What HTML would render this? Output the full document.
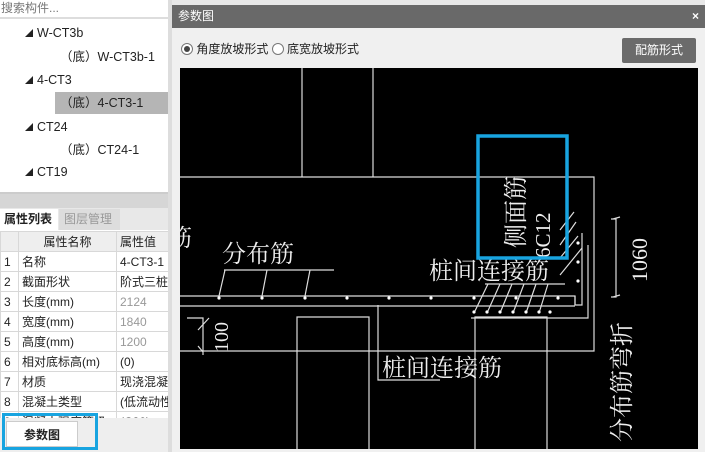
<!DOCTYPE html>
<html><head><meta charset="utf-8"><style>
*{margin:0;padding:0;box-sizing:border-box}
body{width:705px;height:452px;overflow:hidden;background:#f0f0f0;position:relative;font-family:"Liberation Sans","Noto Sans CJK SC",sans-serif;font-size:12px;color:#222}
.abs{position:absolute}
.tree div{position:absolute;height:22px;line-height:22px;font-size:12.5px}
.tri{font-size:8px;vertical-align:1px;margin-right:4px}
table{border-collapse:collapse;font-size:12px}
td{border:1px solid #d8d8d8;height:20px;padding:0 3px;white-space:nowrap;overflow:hidden;background:#fff}
</style></head><body>
<div class="abs" style="left:0;top:0;width:168px;height:452px;background:#fff"></div>
<div class="abs" style="left:0;top:0;width:168px;height:19px;border-bottom:2px solid #ddd;color:#777;line-height:17px;padding-left:1px">搜索构件...</div>
<div class="tree">
<div style="left:25px;top:22px"><span class="tri">◢</span>W-CT3b</div>
<div style="left:60px;top:46px">（底）W-CT3b-1</div>
<div style="left:25px;top:69px"><span class="tri">◢</span>4-CT3</div>
<div style="left:55px;top:92px;width:113px;background:#b5b5b5;padding-left:5px">（底）4-CT3-1</div>
<div style="left:25px;top:116px"><span class="tri">◢</span>CT24</div>
<div style="left:60px;top:139px">（底）CT24-1</div>
<div style="left:25px;top:161px"><span class="tri">◢</span>CT19</div>
</div>
<div class="abs" style="left:0;top:192px;width:168px;height:16px;background:#d6d6d6;border-top:2px solid #ccc"></div>
<div class="abs" style="left:0;top:208px;width:168px;height:22px;background:#e8e8e8"></div>
<div class="abs" style="left:0;top:209px;width:58px;height:21px;background:#fff;font-weight:bold;line-height:21px;padding-left:4px">属性列表</div>
<div class="abs" style="left:59px;top:209px;width:61px;height:21px;background:#ddd;color:#999;line-height:21px;padding-left:5px">图层管理</div>
<table class="abs" style="left:0;top:231px;width:168px;table-layout:fixed">
<colgroup><col style="width:18px"><col style="width:98px"><col style="width:52px"></colgroup>
<tr><td style="background:#eee"></td><td style="background:#eee;text-align:center">属性名称</td><td style="background:#eee">属性值</td></tr>
<tr><td>1</td><td>名称</td><td>4-CT3-1</td></tr>
<tr><td>2</td><td>截面形状</td><td>阶式三桩台</td></tr>
<tr><td>3</td><td>长度(mm)</td><td style="color:#999">2124</td></tr>
<tr><td>4</td><td>宽度(mm)</td><td style="color:#999">1840</td></tr>
<tr><td>5</td><td>高度(mm)</td><td style="color:#999">1200</td></tr>
<tr><td>6</td><td>相对底标高(m)</td><td>(0)</td></tr>
<tr><td>7</td><td>材质</td><td>现浇混凝土</td></tr>
<tr><td>8</td><td>混凝土类型</td><td>(低流动性混</td></tr>
<tr><td>9</td><td>混凝土强度等级</td><td>(C30)</td></tr>
</table>
<div class="abs" style="left:0;top:418px;width:168px;height:34px;background:#eee"></div>
<div class="abs" style="left:6px;top:421px;width:72px;height:26px;background:#fff;border:1px solid #ccc;text-align:center;line-height:26px;font-weight:bold">参数图</div>
<div class="abs" style="left:2px;top:413px;width:96px;height:37px;border:3px solid #18a4e0"></div>
<div class="abs" style="left:168px;top:0;width:4px;height:452px;background:#ddd"></div>
<div class="abs" style="left:172px;top:5px;width:533px;height:23px;background:#696969;color:#fff;line-height:23px;padding-left:6px;font-size:12px">参数图<span style="position:absolute;right:6px;font-weight:bold">×</span></div>
<div class="abs" style="left:172px;top:0;width:533px;height:5px;background:#e8e8e8"></div>
<div class="abs" style="left:181px;top:42px;font-size:12px;line-height:14px"><span style="display:inline-block;width:12px;height:12px;border:1px solid #777;border-radius:50%;vertical-align:-2px;position:relative;background:#fff"><span style="position:absolute;left:2px;top:2px;width:6px;height:6px;border-radius:50%;background:#444"></span></span> 角度放坡形式 <span style="display:inline-block;width:12px;height:12px;border:1px solid #777;border-radius:50%;vertical-align:-2px;background:#fff"></span> 底宽放坡形式</div>
<div class="abs" style="left:622px;top:38px;width:74px;height:25px;background:#6b6b6b;color:#fff;border-radius:2px;text-align:center;line-height:25px">配筋形式</div>
<svg class="abs" style="left:180px;top:68px" width="518" height="381" viewBox="180 68 518 381">
<rect x="180" y="68" width="518" height="381" fill="#000"/>
<g stroke="#ddd" stroke-width="1.2" fill="none">
<path d="M302 68V177M373 68V177M180 177H594V351H180"/>
<path d="M297 449V317H369V449M475 449V317H547V449"/>
<path d="M378 305V380H440"/>
<path d="M180 296H575V305M180 306H575"/>
<path d="M575 296V305H582V233M588 245V318H471"/>
<path d="M224 270H334M225 270L219 296M267 270L262 296M310 270L305 296"/>
<path d="M485 284H565M488 284L474 313M500 284L487 313M512 284L500 313M524 284L513 313M536 284L526 313M548 284L539 313"/>
<path d="M560 230L574 212M560 245L576 222M560 258L578 236M560 275L582 248"/>
<path d="M187 318H203V355M198 330L209 318M198 346L203 352"/>
<path d="M611 219H616V297H611M613 219L620 217M613 297L620 295"/>
</g>
<g fill="#fff"><circle cx="219" cy="298" r="1.6"/><circle cx="262" cy="298" r="1.6"/><circle cx="305" cy="298" r="1.6"/><circle cx="347" cy="298" r="1.6"/><circle cx="389" cy="298" r="1.6"/><circle cx="431" cy="298" r="1.6"/><circle cx="474" cy="298" r="1.6"/><circle cx="516" cy="298" r="1.6"/><circle cx="558" cy="298" r="1.6"/>
<circle cx="474" cy="312" r="1.6"/><circle cx="487" cy="312" r="1.6"/><circle cx="500" cy="312" r="1.6"/><circle cx="513" cy="312" r="1.6"/><circle cx="526" cy="312" r="1.6"/><circle cx="539" cy="312" r="1.6"/><circle cx="550" cy="312" r="1.6"/>
<circle cx="578" cy="243" r="1.6"/><circle cx="578" cy="262" r="1.6"/><circle cx="578" cy="281" r="1.6"/></g>
<g fill="#eee" font-family="Liberation Serif,Noto Serif CJK SC,serif" font-size="24">
<text x="168" y="246">筋</text>
<text x="222" y="262">分布筋</text>
<text x="429" y="279">桩间连接筋</text>
<text x="382" y="376">桩间连接筋</text>
<text transform="translate(228,352) rotate(-90)" font-size="20">100</text>
<text transform="translate(647,282) rotate(-90)" font-size="22">1060</text>
<text transform="translate(630,442) rotate(-90)" font-size="24">分布筋弯折</text>
<text transform="translate(524,248) rotate(-90)" font-size="24">侧面筋</text>
<text transform="translate(550,258) rotate(-90)" font-size="21">6C12</text>
</g>
<rect x="478" y="136" width="89" height="122" fill="none" stroke="#18a4e0" stroke-width="3.5"/>
</svg>
</body></html>
